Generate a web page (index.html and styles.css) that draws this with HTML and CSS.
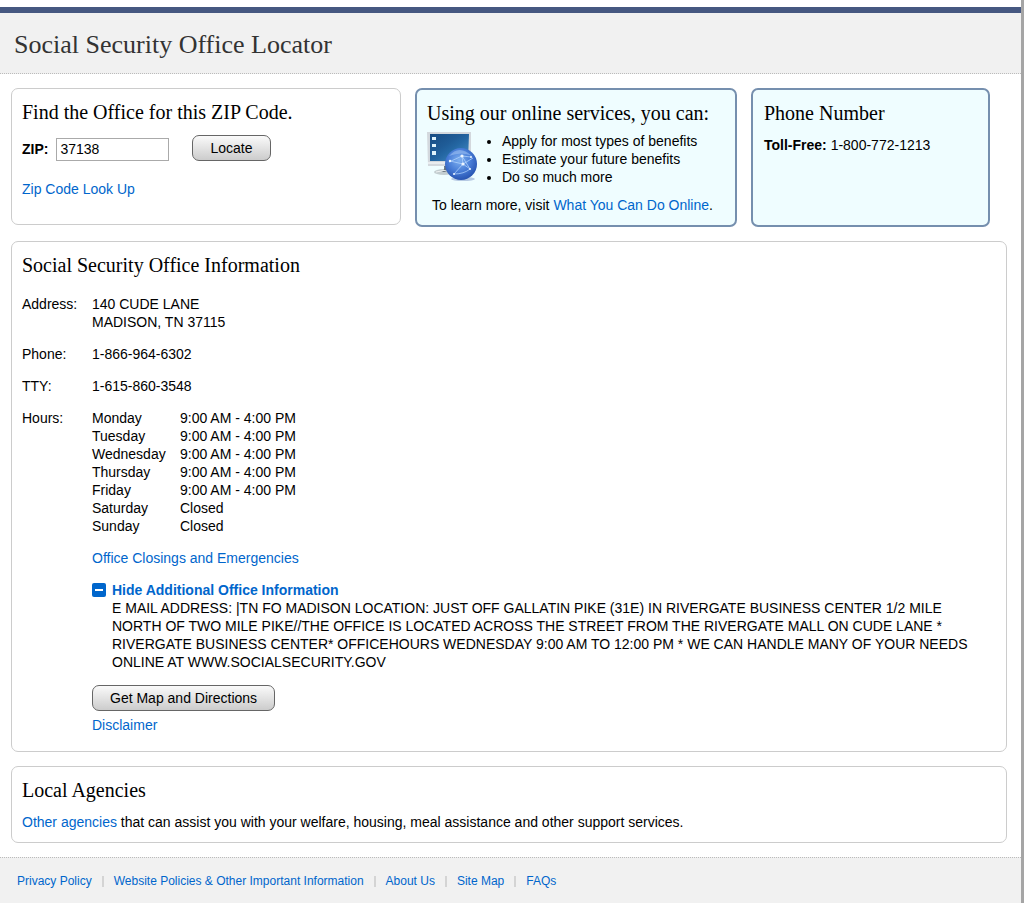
FILE: index.html
```html
<!DOCTYPE html>
<html lang="en">
<head>
<meta charset="utf-8">
<title>Social Security Office Locator</title>
<link rel="stylesheet" href="styles.css">
</head>
<body>
<header class="site-header"><h1>Social Security Office Locator</h1></header>
<main class="content">
  <div class="top-row">
    <section class="card card-zip">
      <h2>Find the Office for this ZIP Code.</h2>
      <form class="zip-form">
        <label for="zip">ZIP:</label>
        <input id="zip" class="zip-input" type="text" value="37138">
        <button class="button" type="button">Locate</button>
      </form>
      <a href="#">Zip Code Look Up</a>
    </section>
    <section class="card card-accent">
      <h2>Using our online services, you can:</h2>
      <div class="services">
        <svg class="services-icon" viewBox="0 0 50 50" aria-hidden="true">
          <defs>
            <linearGradient id="screen" x1="0" y1="0" x2="1" y2="1">
              <stop offset="0" stop-color="#184c83"/><stop offset=".4" stop-color="#1f5c97"/><stop offset=".55" stop-color="#2467a3"/><stop offset="1" stop-color="#4a93cc"/>
            </linearGradient>
            <radialGradient id="globe" cx=".45" cy=".38" r=".65">
              <stop offset="0" stop-color="#7fb0f0"/><stop offset=".55" stop-color="#477cd6"/><stop offset="1" stop-color="#2450ae"/>
            </radialGradient>
          </defs>
          <ellipse cx="17" cy="40" rx="10" ry="3" fill="#c3cdd0"/>
          <path d="M17 34h8v6H14q4-1 3-6z" fill="#66717a"/>
          <path d="M9 40q8-3 16 0" fill="none" stroke="#eef2f3"/>
          <path d="M0 0h44v34H1z" fill="#d3d8dd"/>
          <path d="M3 2h39l-1 27H3z" fill="url(#screen)"/>
          <path d="M1 31h42" stroke="#e9ecef" stroke-width="2"/>
          <path d="M5 5h4v3H5zM5 12h4v3H5zM5 19h4v4H5z" fill="#dff2fb"/>
          <ellipse cx="36" cy="47" rx="12" ry="2" fill="#b5c9e3"/>
          <circle cx="34" cy="32" r="16" fill="url(#globe)"/>
          <path d="M22 24q10-12 23 0Q35 19 22 24z" fill="#a9caf5" opacity=".5"/>
          <g fill="none" stroke="#b7d8ff" stroke-width=".7">
            <path d="M22 30l13-6 9 1M35 24l1 8-9 10M35 24l8 13-7-5-13-3M36 32l10-6M27 42q10 0 16-5"/>
          </g>
          <g fill="#eef6ff"><circle cx="23" cy="29" r="1.2"/><circle cx="35" cy="24" r="1.6"/><circle cx="36" cy="32" r="1.6"/><circle cx="43" cy="37" r="1"/><circle cx="27" cy="42" r="1"/><circle cx="44" cy="25" r="1"/></g>
        </svg>
        <ul>
          <li>Apply for most types of benefits</li>
          <li>Estimate your future benefits</li>
          <li>Do so much more</li>
        </ul>
      </div>
      <p class="learn-more">To learn more, visit <a href="#">What You Can Do Online</a>.</p>
    </section>
    <section class="card card-accent card-phone">
      <h2>Phone Number</h2>
      <p class="toll-free"><strong>Toll-Free:</strong> 1-800-772-1213</p>
    </section>
  </div>

  <section class="card card-office">
    <h2>Social Security Office Information</h2>
    <dl class="details">
      <dt>Address:</dt>
      <dd>140 CUDE LANE<br>MADISON, TN 37115</dd>
      <dt>Phone:</dt>
      <dd>1-866-964-6302</dd>
      <dt>TTY:</dt>
      <dd>1-615-860-3548</dd>
      <dt>Hours:</dt>
      <dd>
        <table class="hours">
          <tr><th scope="row">Monday</th><td>9:00 AM - 4:00 PM</td></tr>
          <tr><th scope="row">Tuesday</th><td>9:00 AM - 4:00 PM</td></tr>
          <tr><th scope="row">Wednesday</th><td>9:00 AM - 4:00 PM</td></tr>
          <tr><th scope="row">Thursday</th><td>9:00 AM - 4:00 PM</td></tr>
          <tr><th scope="row">Friday</th><td>9:00 AM - 4:00 PM</td></tr>
          <tr><th scope="row">Saturday</th><td>Closed</td></tr>
          <tr><th scope="row">Sunday</th><td>Closed</td></tr>
        </table>
      </dd>
    </dl>
    <div class="office-extra">
      <p><a href="#">Office Closings and Emergencies</a></p>
      <div class="additional">
        <svg class="collapse-icon" viewBox="0 0 14 14" aria-hidden="true"><rect width="14" height="14" rx="2" fill="#06c"/><path d="M3 7h8" stroke="#fff" stroke-width="2"/></svg>
        <div>
          <a class="toggle" href="#">Hide Additional Office Information</a>
          <p>E MAIL ADDRESS: |TN FO MADISON LOCATION: JUST OFF GALLATIN PIKE (31E) IN RIVERGATE BUSINESS CENTER 1/2 MILE NORTH OF TWO MILE PIKE//THE OFFICE IS LOCATED ACROSS THE STREET FROM THE RIVERGATE MALL ON CUDE LANE * RIVERGATE BUSINESS CENTER* OFFICEHOURS WEDNESDAY 9:00 AM TO 12:00 PM * WE CAN HANDLE MANY OF YOUR NEEDS ONLINE AT WWW.SOCIALSECURITY.GOV</p>
        </div>
      </div>
      <div class="actions">
        <button class="button" type="button">Get Map and Directions</button>
        <a href="#">Disclaimer</a>
      </div>
    </div>
  </section>

  <section class="card card-local">
    <h2>Local Agencies</h2>
    <p><a href="#">Other agencies</a> that can assist you with your welfare, housing, meal assistance and other support services.</p>
  </section>
</main>
<footer class="site-footer">
  <ul class="footer-links">
    <li><a href="#">Privacy Policy</a></li>
    <li><a href="#">Website Policies &amp; Other Important Information</a></li>
    <li><a href="#">About Us</a></li>
    <li><a href="#">Site Map</a></li>
    <li><a href="#">FAQs</a></li>
  </ul>
</footer>
</body>
</html>
```
FILE: styles.css
```css
* {
  box-sizing: border-box;
}

body {
  display: flex;
  flex-direction: column;
  min-height: 100vh;
  margin: 0;
  padding-top: 7px;
  border-right: 3px solid #a5a5a5;
  background: #fff;
  color: #000;
  font: 14px/18px Arial, "Liberation Sans", sans-serif;
}

h1, h2, p, ul, dl, dd {
  margin: 0;
  padding: 0;
}

h1, h2 {
  font-family: Georgia, "Liberation Serif", serif;
  font-weight: normal;
}

h1 {
  color: #333;
  font-size: 26px;
  line-height: 32px;
}

h2 {
  font-size: 20px;
  line-height: 26px;
}

a {
  color: #06c;
  text-decoration: none;
}

.site-header {
  padding: 16px 14px 12px;
  border-top: 6px solid #465881;
  border-bottom: 1px dotted #bbb;
  background: #f1f1f1;
}

.content {
  display: flex;
  flex-direction: column;
  gap: 14px;
  padding: 14px 14px 14px 11px;
}

.top-row {
  display: grid;
  grid-template-columns: 390fr 322fr 239fr;
  gap: 14px;
  padding-right: 17px;
}

.card {
  min-width: 0;
  padding: 10px;
  border: 1px solid #ccc;
  border-radius: 7px;
}

.card-accent {
  padding-bottom: 11px;
  border: 2px solid #758fae;
  background: #effdff;
}

.card-phone {
  padding-left: 11px;
}

.card-zip {
  margin-bottom: 2px;
}

.zip-form {
  display: flex;
  align-items: center;
  margin: 10px 0 19px;
}

.zip-form label {
  padding-top: 2px;
  font-weight: bold;
}

.zip-input {
  width: 113px;
  height: 23px;
  margin: 2px 23px 0 8px;
  padding: 0 3px;
  border: 1px solid #aaa;
  font: inherit;
}

.button {
  height: 26px;
  padding: 0 17px;
  border: 1px solid #666;
  border-radius: 7px;
  background: linear-gradient(#fafafa, #ccc);
  color: #000;
  font: inherit;
}

.services {
  display: flex;
  margin-top: 6px;
}

.services-icon {
  flex: none;
  width: 50px;
  height: 50px;
}

.services ul {
  padding-left: 25px;
}

.learn-more {
  margin: 10px 0 0 5px;
}

.toll-free {
  margin-top: 10px;
}

.details {
  display: grid;
  grid-template-columns: 70px 1fr;
  row-gap: 14px;
  margin-top: 17px;
}

.hours {
  border-collapse: collapse;
}

.hours th {
  width: 88px;
  padding: 0;
  font-weight: normal;
  text-align: left;
}

.hours td {
  padding: 0;
}

.office-extra {
  display: flex;
  flex-direction: column;
  gap: 14px;
  padding: 14px 16px 7px 70px;
}

.additional {
  display: flex;
  gap: 6px;
}

.toggle {
  font-weight: bold;
}

.collapse-icon {
  flex: none;
  width: 14px;
  height: 14px;
  margin-top: 2px;
}

.actions {
  display: flex;
  flex-direction: column;
  align-items: flex-start;
  gap: 5px;
}

.card-local {
  padding-bottom: 11px;
}

.card-local p {
  margin-top: 10px;
}

.site-footer {
  flex: 1;
  padding: 14px 17px 13px;
  border-top: 1px dotted #bbb;
  background: #f1f1f1;
  font-size: 12px;
}

.footer-links {
  display: flex;
  flex-wrap: wrap;
  align-items: center;
  list-style: none;
}

.footer-links li {
  line-height: 18px;
}

.footer-links li + li::before {
  display: inline-block;
  width: 2px;
  height: 11px;
  margin: 0 10px;
  background: #d4d4d4;
  content: "";
  vertical-align: -2px;
}
```
